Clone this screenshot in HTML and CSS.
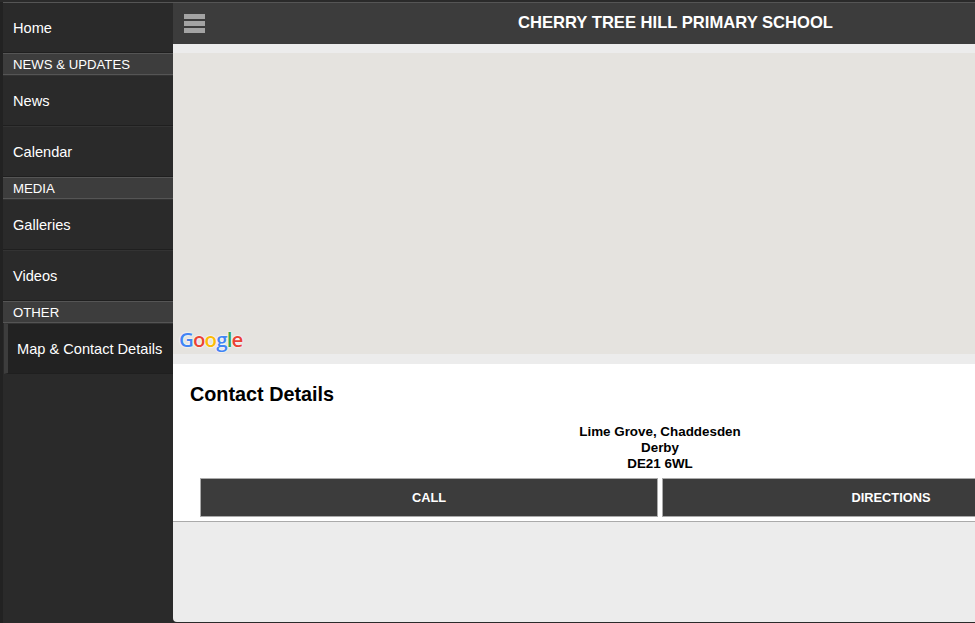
FILE: index.html
```
<!DOCTYPE html>
<html lang="en">
<head>
<meta charset="utf-8">
<title>Cherry Tree Hill Primary School</title>
<link rel="stylesheet" href="styles.css">
</head>
<body>
<div class="app">
  <nav class="sidebar">
    <a class="item">Home</a>
    <div class="divider">NEWS &amp; UPDATES</div>
    <a class="item">News</a>
    <a class="item">Calendar</a>
    <div class="divider">MEDIA</div>
    <a class="item">Galleries</a>
    <a class="item">Videos</a>
    <div class="divider">OTHER</div>
    <a class="item active">Map &amp; Contact Details</a>
  </nav>
  <main class="main">
    <header class="topbar">
      <svg class="burger" width="22" height="20" viewBox="0 0 22 20"><rect x="0" y="0" width="21" height="5" fill="#a3a3a3"/><rect x="0" y="7" width="21" height="5" fill="#a3a3a3"/><rect x="0" y="14" width="21" height="5" fill="#a3a3a3"/></svg>
      <h1 class="title">CHERRY TREE HILL PRIMARY SCHOOL</h1>
    </header>
    <div class="map">
      <div class="google"><span class="g-blue">G</span><span class="g-red">o</span><span class="g-yellow">o</span><span class="g-blue">g</span><span class="g-green">l</span><span class="g-red">e</span></div>
    </div>
    <section class="panel">
      <h2 class="heading">Contact Details</h2>
      <address class="address">Lime Grove, Chaddesden<br>Derby<br>DE21 6WL</address>
      <div class="buttons">
        <a class="btn">CALL</a>
        <a class="btn">DIRECTIONS</a>
      </div>
    </section>
  </main>
</div>
</body>
</html>
```
FILE: styles.css
```
* { box-sizing: border-box; }
html, body { margin: 0; height: 100%; overflow: hidden; }
body { background: #222; font-family: "Liberation Sans", Arial, sans-serif; }
.app { display: flex; height: 623px; width: 975px; overflow: hidden; padding-top: 2px; background: #2a2a2a; }
.sidebar { flex: 0 0 173px; padding-left: 3px; background: #2a2a2a; display: flex; flex-direction: column; box-shadow: inset 3px 0 0 #222; }
.item { display: flex; align-items: center; height: 51px; padding-left: 10px; color: #fff; font-size: 14.6px; background: #2a2a2a; border-top: 1px solid #333; border-bottom: 1px solid #1f1f1f; }
.item:first-child { border-top-color: #555; }
.divider { height: 22px; padding-left: 10px; line-height: 21px; color: #fff; font-size: 13.2px; background: #3d3d3d; border-top: 1px solid #555; border-bottom: 1px solid #555; }
.item.active { border-left: 4px solid #3d3d3d; background: #222; margin-left: 1px; padding-left: 9px; }
.main { flex: 0 0 975px; width: 975px; background: #ececec; height: 620px; border-radius: 0 0 0 4px; overflow: hidden; display: flex; flex-direction: column; border-top: 1px solid #555; }
.topbar { position: relative; display: flex; align-items: center; justify-content: center; height: 41px; padding: 0 0 2px 30px; background: #3c3c3c; flex: none; }
.burger { position: absolute; left: 11px; top: 11px; }
.title { margin: 0; color: #fff; font-size: 16.6px; font-weight: bold; }
.map { position: relative; flex: none; height: 301px; margin-top: 9px; background: #e5e3df; }
.google { position: absolute; left: 6px; bottom: 1px; font-family: "Open Sans", sans-serif; font-size: 20.5px; font-weight: 600; letter-spacing: -0.9px; text-shadow: 0 0 2px #fff, 0 0 2px #fff; }
.g-blue { color: #4285f4; }
.g-red { color: #ea4335; }
.g-yellow { color: #fbbc05; }
.g-green { color: #34a853; }
.panel { flex: none; margin-top: 10px; background: #fff; height: 158px; border-bottom: 1px solid #aaa; padding: 18px 0 0 17px; }
.heading { margin: 0; font-size: 19.8px; font-weight: bold; color: #000; line-height: 24px; }
.address { margin-top: 18px; font-style: normal; text-align: center; font-weight: bold; font-size: 13.4px; line-height: 16px; color: #000; width: 940px; }
.buttons { display: flex; gap: 4px; margin: 0 0 0 10px; padding-top: 6px; width: 920px; }
.btn { flex: 1; height: 39px; display: flex; align-items: center; justify-content: center; background: #3c3c3c; border: 1px solid #aaa; color: #fff; font-size: 12.8px; font-weight: bold; }
```
